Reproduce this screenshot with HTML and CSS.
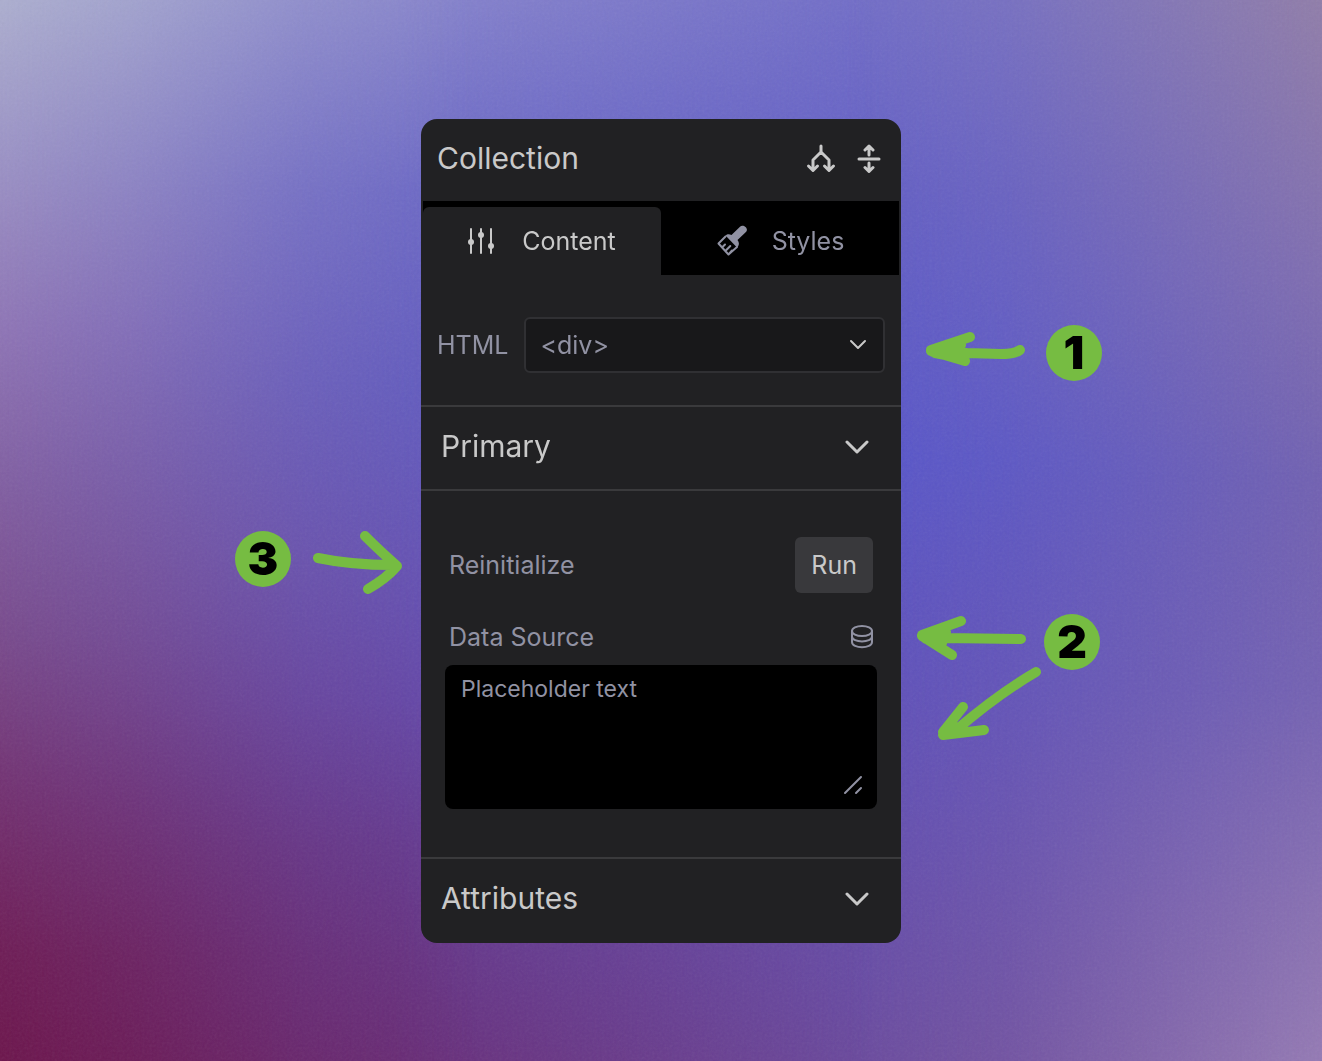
FILE: index.html
```html
<!DOCTYPE html>
<html lang="en">
<head>
    <meta charset="utf-8">
    <meta name="viewport" content="width=device-width, initial-scale=1">
    <title>Collection settings</title>
    <link rel="stylesheet" href="styles.css">
</head>
<body>
    <div class="backdrop" aria-hidden="true">
        <div class="tint tint-middle"></div>
        <div class="tint tint-left"></div>
        <div class="tint tint-right"></div>
        <svg class="grain">
            <filter id="noise">
                <feTurbulence type="fractalNoise" baseFrequency="0.4" numOctaves="2"/>
                <feColorMatrix type="saturate" values="0"/>
            </filter>
            <rect width="100%" height="100%" filter="url(#noise)"/>
        </svg>
    </div>

    <main class="stage">
        <section class="panel">
            <header class="panel-header">
                <h1>Collection</h1>
                <div class="header-actions">
                    <button type="button" class="icon-button" aria-label="Split">
                        <svg width="30" height="30" viewBox="0 0 30 30">
                            <path d="M15 3v6M15 9l-8 8v10M15 9l8 8v10M2.500 23L7 27.500l4.500-4.500M18.500 23L23 27.500l4.500-4.500"/>
                        </svg>
                    </button>
                    <button type="button" class="icon-button" aria-label="Expand">
                        <svg width="30" height="30" viewBox="0 0 30 30">
                            <path d="M5 16h20M15 12V4M15 20v8M11 7l4-4 4 4M11 24.500l4 4 4-4"/>
                        </svg>
                    </button>
                </div>
            </header>

            <nav class="tabs">
                <button type="button" class="tab active">
                    <svg class="sliders" width="30" height="30" viewBox="0 0 30 30">
                        <path d="M3 3v24M13 3v24M23 3v24"/>
                        <circle cx="3" cy="16" r="3"/>
                        <circle cx="13" cy="9" r="3"/>
                        <circle cx="23" cy="20" r="3"/>
                    </svg>
                    Content
                </button>
                <button type="button" class="tab">
                    <svg class="brush" width="32" height="32" viewBox="0 0 32 32">
                        <path class="solid" d="M9.500 10.500c2-2 4-1.500 6-.5L24 1.800c3-3 9 1.500 6.200 5L21.500 15c1.500 2 2 4 .5 6.500l-1 1z"/>
                        <path d="M9.500 11.500L2.500 18.500 12.500 29.500l8.500-7.500M6 22.500l3-3M9.300 26l5-5M12.500 29.500l3.500-4"/>
                    </svg>
                    Styles
                </button>
            </nav>

            <div class="tag-row">
                <label for="tag">HTML</label>
                <div class="select-wrap">
                    <select id="tag">
                        <option>&lt;div&gt;</option>
                    </select>
                    <svg class="chevron" width="20" height="12" viewBox="0 0 20 12"><path d="M3 2l7 7 7-7"/></svg>
                </div>
            </div>

            <button type="button" class="section-toggle">
                Primary
                <svg class="chevron" width="26" height="16" viewBox="0 0 26 16"><path d="M3 4l10 10L23 4"/></svg>
            </button>

            <div class="section-body">
                <div class="field-row">
                    <span>Reinitialize</span>
                    <button type="button" class="run">Run</button>
                </div>
                <div class="field-row">
                    <label for="source">Data Source</label>
                    <button type="button" class="data-button" aria-label="Pick a data source">
                        <svg width="26" height="26" viewBox="0 0 26 26">
                            <ellipse cx="13" cy="7" rx="10" ry="5"/>
                            <path d="M3 7v11c0 7 20 7 20 0V7M3 12.500c0 6.500 20 6.500 20 0"/>
                        </svg>
                    </button>
                </div>
                <div class="textarea-wrap">
                    <textarea id="source" placeholder="Placeholder text"></textarea>
                    <svg class="grip" width="20" height="20" viewBox="0 0 20 20"><path d="M2 18L18 2M13 18l5-5"/></svg>
                </div>
            </div>

            <button type="button" class="section-toggle">
                Attributes
                <svg class="chevron" width="26" height="16" viewBox="0 0 26 16"><path d="M3 4l10 10L23 4"/></svg>
            </button>
        </section>

        <div class="callout callout-1">
            <svg width="105" height="56" viewBox="0 0 105 56">
                <path d="M99 25Q94 29 80 29L46 28L10 25L49 12M10 26L44 36M12 27L40 20M14 28L40 33"/>
            </svg>
            <span class="badge">1</span>
        </div>

        <div class="callout callout-2">
            <svg width="130" height="136" viewBox="0 0 130 136">
                <path d="M109 25L34 24L10 21L49 7M10 22L40 41M14 22L34 18M14 25L30 29"/>
                <path d="M124 58Q86 80 43 117L31 118L51 93M31 121L72 116M34 117L50 112"/>
            </svg>
            <span class="badge">2</span>
        </div>

        <div class="callout callout-3">
            <span class="badge">3</span>
            <svg width="94" height="66" viewBox="0 0 94 66">
                <path d="M7 27Q40 34 82 34M54 5Q68 19 86 35Q76 47 57 58"/>
            </svg>
        </div>
    </main>
</body>
</html>
```
FILE: styles.css
```css
* {
    box-sizing: border-box;
}
body {
    margin: 0;
    min-height: 100vh;
    display: flex;
    align-items: center;
    justify-content: center;
    font-family: Inter, "Liberation Sans", sans-serif;
    font-size: 25px;
    line-height: 32px;
    color: #9192a3;
}
button, select, textarea {
    font: inherit;
    color: inherit;
    border: none;
    margin: 0;
}
button {
    background: none;
    padding: 0;
    cursor: pointer;
}
svg {
    display: block;
    flex: none;
    fill: none;
    stroke: currentColor;
    stroke-linecap: round;
    stroke-linejoin: round;
}

/* background: vertical colour ramps faded into each other */
.backdrop {
    position: fixed;
    inset: 0;
    z-index: -1;
    background: linear-gradient(#716dc8, #635fc6 18%, #5856ca 43%, #6050b8 68%, #6a4a9e);
}
.tint {
    position: absolute;
    inset: 0;
}
.tint-middle {
    background: linear-gradient(#8683cc, #6a67c6 18%, #605bc0 36%, #6353b7 52%, #6348aa 66%, #643b92 80%, #682e7a);
    mask-image: linear-gradient(to right, #000 30%, #0008 48%, transparent 66%);
}
.tint-left {
    background: linear-gradient(#acaecf, #9c94c6 14%, #8e74b5 31%, #815fa2 45%, #784a8c 60%, #723070 75%, #6e1c55 90%, #6c154c);
    mask-image: linear-gradient(to right, #000, #000b 10%, #0004 23%, transparent 36%);
}
.tint-right {
    background: linear-gradient(#907da9, #806eb0 25%, #7161b1 45%, #7462b2 65%, #8870b2 85%, #947ab4);
    mask-image: linear-gradient(to left, #000, #0009 12%, #0003 24%, transparent 36%);
}
.grain {
    position: absolute;
    width: 100%;
    height: 100%;
    opacity: 0.08;
}

.stage {
    position: relative;
    width: 100%;
    max-width: 480px;
}
.panel {
    background: #212123;
    border-radius: 16px;
}

/* header */
.panel-header {
    display: flex;
    align-items: center;
    justify-content: space-between;
    padding: 22px 17px 26px 16px;
    color: #c9c9c9;
}
h1 {
    margin: 0;
    font-size: 30px;
    font-weight: 400;
    line-height: 34px;
}
.header-actions {
    display: flex;
    gap: 18px;
}
.icon-button {
    stroke-width: 3px;
}

/* tabs */
.tabs {
    display: flex;
    margin: 0 2px;
    padding-top: 6px;
    background: #000;
}
.tab {
    flex: 1;
    display: flex;
    align-items: center;
    justify-content: center;
    gap: 24px;
    padding: 18px 0;
}
.tab.active {
    color: #c9c9c9;
    background: #212123;
    border-radius: 6px 6px 0 0;
}
.sliders {
    overflow: visible;
    stroke-width: 2px;
}
.sliders circle {
    fill: currentColor;
    stroke: none;
}
.brush {
    stroke-width: 2px;
}
.brush .solid {
    fill: currentColor;
    stroke: none;
}

/* tag select */
.tag-row {
    display: flex;
    align-items: center;
    gap: 16px;
    padding: 42px 16px 32px;
}
.select-wrap {
    position: relative;
    flex: 1;
}
select {
    display: block;
    appearance: none;
    width: 100%;
    height: 56px;
    padding: 0 14px;
    background: #18181a;
    border: 2px solid #303033;
    border-radius: 6px;
}
.chevron {
    color: #c9c9c9;
    stroke-width: 3px;
}
.select-wrap .chevron {
    position: absolute;
    right: 17px;
    top: 22px;
    stroke-width: 2px;
    pointer-events: none;
}

/* sections */
.section-toggle {
    display: flex;
    align-items: center;
    justify-content: space-between;
    width: 100%;
    padding: 22px 31px 26px 20px;
    border-top: 2px solid #3a3a3c;
    font-size: 30px;
    line-height: 34px;
    color: #c9c9c9;
}
.section-toggle:last-child {
    padding-bottom: 28px;
}
.section-body {
    padding: 46px 24px 48px;
    border-top: 2px solid #3a3a3c;
}
.field-row {
    display: flex;
    align-items: center;
    justify-content: space-between;
    height: 56px;
    padding: 0 4px;
}
.field-row + .field-row {
    margin-top: 16px;
    padding-right: 2px;
}
.run {
    padding: 12px 16px;
    background: #39393c;
    border-radius: 6px;
    color: #c9c9c9;
}
.data-button {
    stroke-width: 2px;
}
.textarea-wrap {
    position: relative;
}
textarea {
    display: block;
    width: 100%;
    height: 144px;
    padding: 8px 16px;
    background: #000;
    border-radius: 8px;
    font-size: 23px;
    resize: none;
}
textarea::placeholder {
    color: #9192a3;
    opacity: 1;
}
.grip {
    position: absolute;
    right: 14px;
    bottom: 14px;
    stroke-width: 2px;
    pointer-events: none;
}

/* numbered callouts around the panel */
.callout {
    position: absolute;
    display: flex;
    color: #76bc42;
    stroke-width: 10px;
}
.callout-1 {
    left: 500px;
    top: 206px;
    gap: 20px;
}
.callout-2 {
    left: 491px;
    top: 495px;
    gap: 2px;
}
.callout-3 {
    right: 496px;
    top: 412px;
    gap: 20px;
}
.badge {
    display: flex;
    align-items: center;
    justify-content: center;
    width: 56px;
    height: 56px;
    padding-bottom: 2px;
    border-radius: 50%;
    background: #76bc42;
    color: #000;
    font-size: 46px;
    font-weight: 900;
}
```
